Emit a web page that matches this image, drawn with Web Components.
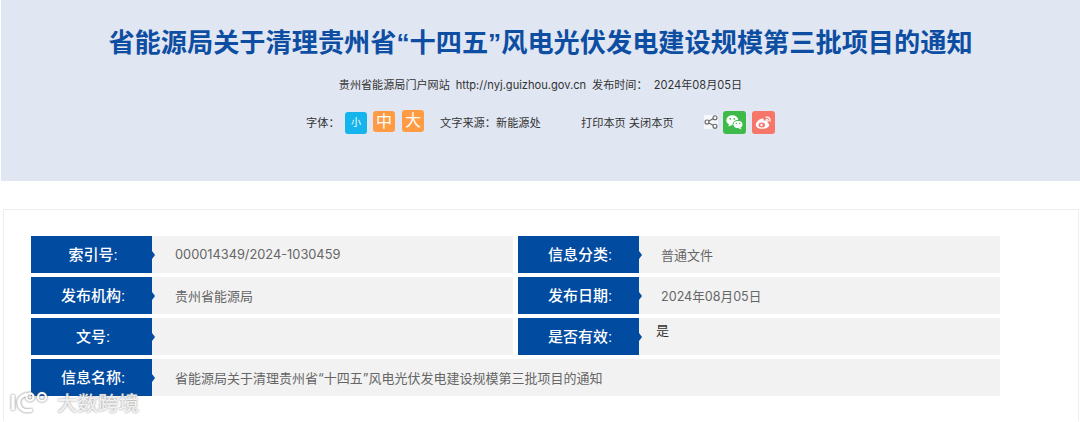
<!DOCTYPE html>
<html lang="zh-CN"><head><meta charset="utf-8"><title>通知</title>
<style>
html,body{margin:0;padding:0;background:#fff;height:422px;overflow:hidden;font-family:"Liberation Sans","Noto Sans CJK SC",sans-serif}
</style></head><body>
<notice-header>
  <span slot="title">省能源局关于清理贵州省“十四五”风电光伏发电建设规模第三批项目的通知</span>
</notice-header>
<info-card>
  <info-row label="索引号:" style="--p:23px;--s:12.8px">000014349/2024-1030459</info-row>
  <info-row label="信息分类:">普通文件</info-row>
  <info-row label="发布机构:" style="--p:23px">贵州省能源局</info-row>
  <info-row label="发布日期:" style="--s:12.6px">2024年08月05日</info-row>
  <info-row label="文号:"></info-row>
  <info-row label="是否有效:" top dark>是</info-row>
  <info-row label="信息名称:" wide style="--p:23px">省能源局关于清理贵州省“十四五”风电光伏发电建设规模第三批项目的通知</info-row>
</info-card>
<water-mark></water-mark>
<script>
function def(name,html,attrs){
  customElements.define(name,class extends HTMLElement{
    constructor(){super();this.attachShadow({mode:'open'}).innerHTML=typeof html==='function'?html(this):html;}
  });
}
def('size-btn',`<style>:host{display:inline-flex;align-items:center;justify-content:center;width:22px;height:var(--h,21px);border-radius:3px;background:var(--b,#ff9b43);color:#fff;font-size:var(--f,16px);line-height:1}</style><slot></slot>`);
def('notice-header',`<style>
:host{display:flex;flex-direction:column;align-items:center;margin-left:1px;height:181px;background:#e0e6f2;color:#333;box-sizing:border-box;padding-top:26px}
h1{margin:0;font-size:26.2px;line-height:34px;font-weight:700;color:#0d4ea3;white-space:nowrap}
.meta{margin-top:17px;font-family:Inter,"Noto Sans CJK SC",sans-serif;font-size:11.1px;line-height:16px;display:flex;gap:6px;white-space:pre;color:#333}
.tools{margin-top:17px;display:flex;align-items:center;font-size:11.2px;height:24px;width:471px;padding-left:1px;box-sizing:border-box;color:#333;white-space:pre}
svg{display:block}
</style>
<h1><slot name="title"></slot></h1>
<div class="meta"><span>贵州省能源局门户网站</span><span>http://nyj.guizhou.gov.cn</span><span>发布时间：  2024年08月05日</span></div>
<div class="tools">
<span style="width:39px">字体：</span>
<size-btn style="--b:#16b4ec;--f:10px;--h:22px;margin-top:2px;margin-right:6px">小</size-btn>
<size-btn style="margin-top:-1px;margin-right:7px">中</size-btn>
<size-btn style="--h:22px;margin-top:-2px;margin-right:16px">大</size-btn>
<span style="width:141px">文字来源：新能源处</span>
<span style="width:123px">打印本页 关闭本页</span>
<svg width="14" height="14" viewBox="0 0 14 14" style="margin-top:-1px;margin-right:5px" fill="none" stroke="#666" stroke-width="1.1"><rect width="14" height="14" fill="#f6f7fa" stroke="none"/><circle cx="3" cy="7" r="2"/><circle cx="11" cy="2.8" r="2"/><circle cx="11" cy="11.2" r="2"/><path d="M4.8 6 9.2 3.8M4.8 8 9.2 10.2"/></svg>
<svg width="23" height="23" viewBox="0 0 23 23" style="margin-right:6px"><rect width="23" height="23" rx="3" fill="#3dba4a"/><ellipse cx="9.3" cy="9.3" rx="6" ry="5" fill="#fff"/><path d="M6 13l-.6 2.6L9 14z" fill="#fff"/><ellipse cx="15" cy="13.5" rx="5" ry="4.2" fill="#fff" stroke="#3dba4a" stroke-width="1"/><path d="M17.5 16.5l1 2-3-1.3z" fill="#fff"/><circle cx="7.3" cy="7.8" r=".9" fill="#3dba4a"/><circle cx="11.3" cy="7.8" r=".9" fill="#3dba4a"/><circle cx="13.3" cy="12.5" r=".7" fill="#3dba4a"/><circle cx="16.7" cy="12.5" r=".7" fill="#3dba4a"/></svg>
<svg width="23" height="23" viewBox="0 0 23 23"><rect width="23" height="23" rx="3" fill="#f6766a"/><path d="M10 17.8c-3.6 0-6.2-1.7-6.2-4.1 0-2.5 3.8-6.3 6.4-6.3 1.4 0 1.7 1 1.3 2.4 2-.8 4.3-.8 4.3 1 0 .5-.1.8-.3 1.1 1 .3 1.7 1 1.7 2 0 2-3 3.9-7.2 3.9z" fill="#fff"/><ellipse cx="9.8" cy="14" rx="3.3" ry="2.5" fill="#f6766a"/><circle cx="9.5" cy="14" r="1.2" fill="#fff"/><path d="M14 6.2c2.5-.6 4.7 1.5 4.1 4M14.3 8.3c1.2-.2 2 .6 1.8 1.8" stroke="#fff" stroke-width="1.2" fill="none" stroke-linecap="round"/></svg>
</div>`);
def('info-card',`<style>
:host{display:block;margin:28px 1px 0 3px;border:1px solid #eeeeee;border-bottom:0;padding:26px 0 0 27px;height:212px;box-sizing:border-box}
.g{display:grid;grid-template-columns:482px 482px;column-gap:5px;row-gap:4px;grid-auto-rows:37px}
</style><div class="g"><slot></slot></div>`);
def('info-row',el=>{
  const wide=el.hasAttribute('wide'),top=el.hasAttribute('top');
  return `<style>
:host{display:flex;background:#f2f2f2;${wide?'grid-column:1 / -1;':''}font-family:Inter,"Noto Sans CJK SC",sans-serif;font-size:var(--s,13px);color:#666;min-width:0}
.l{position:relative;flex:none;width:121px;background:#014ba0;color:#fff;font-family:"Liberation Sans","Noto Sans CJK SC",sans-serif;font-weight:500;font-size:15px;display:flex;align-items:center;justify-content:center;padding:0 0 2px 3px;box-sizing:border-box}
.l::after{content:"";position:absolute;right:-3px;top:50%;margin-top:-4px;border-left:3px solid #014ba0;border-top:4px solid transparent;border-bottom:4px solid transparent}
.v{padding-left:var(--p,22px);display:flex;align-items:center;white-space:nowrap;padding-bottom:1px}
.t{padding-left:17px;align-items:flex-start;padding-top:2px;color:#333}
</style><div class="l">${el.getAttribute('label')}</div><div class="v${top?' t':''}"><slot></slot></div>`;
});
def('water-mark',`<style>
:host{position:absolute;left:10px;top:390px;display:flex;align-items:center;color:rgba(255,255,255,.85);font-family:"Noto Sans CJK SC",sans-serif;font-weight:500;font-size:20.5px;line-height:24px;text-shadow:0 0 2px rgba(100,100,100,.8);gap:9px}
svg{display:block;filter:drop-shadow(0 0 1.2px rgba(90,90,90,.9))}
</style><svg width="38" height="24" viewBox="0 0 38 24" fill="none" stroke="#fff" stroke-width="3.4"><path d="M3 5v15"/><path d="M17 4c-6 2-9 6-8 10 1 6 7 8 13 6"/><circle cx="20" cy="7" r="3.6" stroke-width="2.2"/><circle cx="32" cy="7" r="4" stroke-width="2.2"/></svg><span>大数跨境</span>`);
</script>
</body></html>
